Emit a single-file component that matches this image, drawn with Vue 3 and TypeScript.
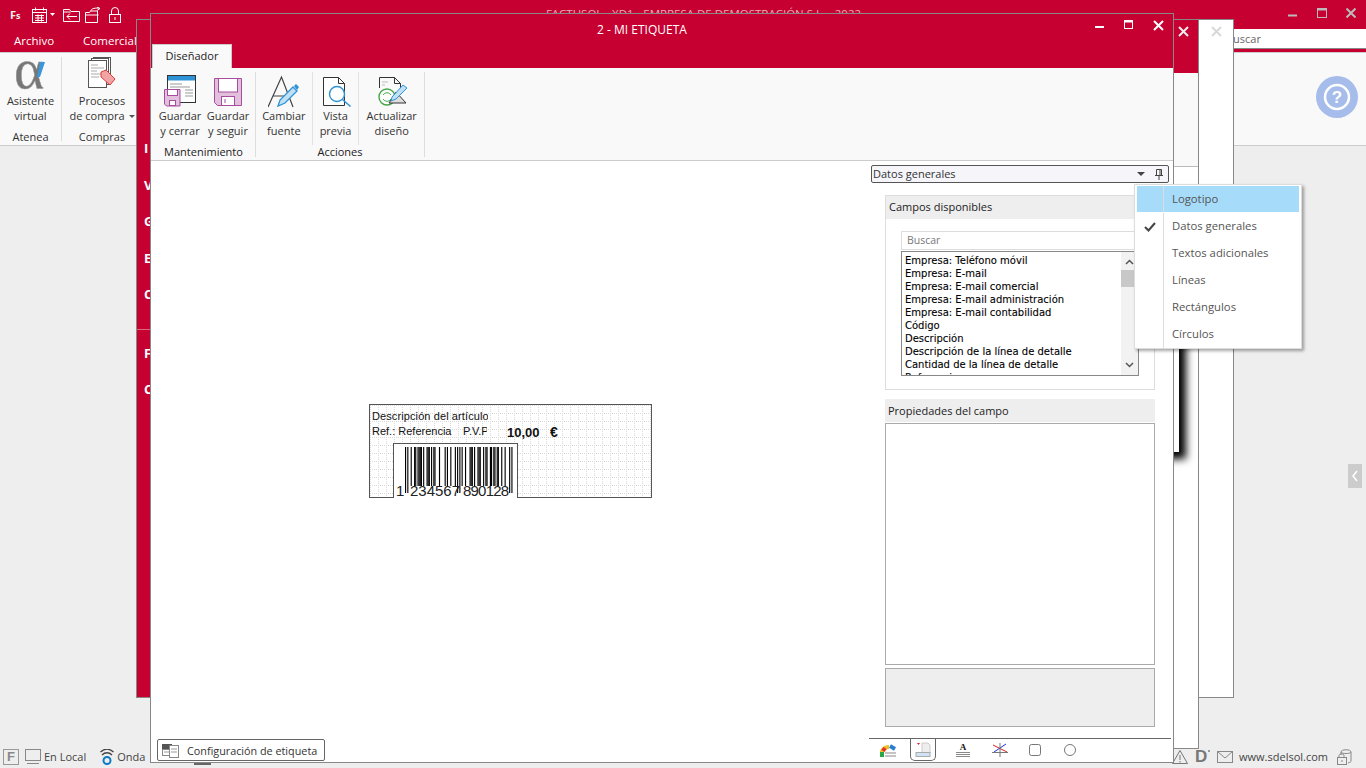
<template>
  <div class="desktop">
    <!-- main app behind everything -->
    <div class="app">
      <div class="app-title">
        <div class="qa">
          <span class="fs">F<small>s</small></span>
          <svg width="24" height="16" viewBox="0 0 24 16" fill="none" stroke="#fff"><rect x="1.500" y="2.500" width="14" height="13"/><path d="M1.500 5.500h14M4.500 .5v3M12.500 .5v3M4 8.500h9M4 11h9M4 13.500h9M7 7.500v7M10.500 7.500v7"/><path d="M19 6h5l-2.500 3z" fill="#fff" stroke="none"/></svg>
          <svg width="17" height="15" viewBox="0 0 17 15" fill="none" stroke="#fff"><path d="M.5 14.500v-12h6l1.500 2h8.500v10zM.5 5h7"/><path d="M14 9.500H4M7 6.500l-3 3 3 3"/></svg>
          <svg class="qa-open" width="16" height="16" viewBox="0 0 16 16" fill="none" stroke="#fff"><path d="M.5 15.500v-10h4l1-1.500h7v11.500zM.5 8h13"/><path d="M6 4c0-2 2-3 8-3M12 .0l3 1.500-3 2"/></svg>
          <svg width="12" height="16" viewBox="0 0 12 16" fill="none" stroke="#fff"><rect x=".5" y="7.500" width="11" height="8"/><path d="M2.500 7.500V4a3.500 3.500 0 0 1 7 0v3.500M6 10v3" /></svg>
        </div>
        <div class="app-name">FACTUSOL - XD1 - EMPRESA DE DEMOSTRACIÓN S.L. - 2022</div>
        <div class="win-btns gray">
          <svg width="10" height="10" viewBox="0 0 10 10"><path d="M0 7.500h9" stroke="#bbb" stroke-width="2"/></svg>
          <svg width="10" height="10" viewBox="0 0 10 10" fill="none" stroke="#bbb"><rect x=".5" y=".5" width="9" height="9"/><path d="M0 1.500h10" stroke-width="2"/></svg>
          <svg width="10" height="10" viewBox="0 0 10 10"><path d="M.5 .5l9 9M9.500 .5l-9 9" stroke="#bbb" stroke-width="2"/></svg>
        </div>
      </div>
      <div class="app-tabs">
        <span class="app-tab">Archivo</span>
        <span class="app-tab second">Comercial</span>
        <div class="app-search">Buscar</div>
      </div>
      <div class="app-ribbon">
        <div class="back-group first">
          <div class="back-btn">
            <svg width="32" height="34" viewBox="0 0 32 34"><text x="0" y="31" font-family="Liberation Serif, serif" font-size="58" fill="#777" stroke="#999" stroke-width=".5">α</text><path d="M23 20l3-15h5l-5 15z" fill="#3a97d9"/></svg>
            <span>Asistente<br />virtual</span>
          </div>
          <div class="back-label">Atenea</div>
        </div>
        <div class="back-group">
          <div class="back-btn">
            <svg width="30" height="34" viewBox="0 0 30 34" fill="#fff" stroke="#555"><rect x="6.500" y=".5" width="17" height="24"/><rect x="4.500" y="1.500" width="17" height="26"/><rect x="1.500" y="3.500" width="18" height="27"/><path d="M4 8h7M4 11h13M4 14h6M4 17h13M4 20h8" stroke="#aaa"/><path d="M14 15l5-2 9 9-5 6-9-8z" fill="#f2a3a3" stroke="#e03c3c"/></svg>
            <span>Procesos<br />de compra <i class="caret" /></span>
          </div>
          <div class="back-label">Compras</div>
        </div>
        <div class="help">
          <svg width="42" height="42" viewBox="0 0 42 42"><circle cx="21" cy="21" r="21" fill="#a6bcea"/><circle cx="21" cy="21" r="12" fill="none" stroke="#fff" stroke-width="2.500"/><text x="21" y="27" text-anchor="middle" font-family="Liberation Sans, sans-serif" font-weight="700" font-size="17" fill="#fff">?</text></svg>
        </div>
      </div>
      <div class="app-empty">
        <div class="side-tab"><svg width="14" height="24" viewBox="0 0 14 24"><path d="M9 7l-4 5 4 5" fill="none" stroke="#fff" stroke-width="1.500"/></svg></div>
      </div>
      <div class="status">
        <div class="status-left">
          <span class="f-box">F</span>
          <svg width="16" height="15" viewBox="0 0 16 15" fill="none" stroke="#888"><rect x=".5" y=".5" width="15" height="11"/><path d="M2 14.500h12"/></svg>
          <span class="st-text">En Local</span>
          <svg class="wave" width="14" height="16" viewBox="0 0 14 16" fill="none"><circle cx="7" cy="11.500" r="3.500" stroke="#0a7bc4" stroke-width="2"/><path d="M2 6c3-3 7-3 10 0M.5 3c4-3.500 9-3.500 13 0" stroke="#444" stroke-width="1.300"/></svg>
          <span class="st-text">Onda</span>
        </div>
        <div class="status-right">
          <svg width="16" height="14" viewBox="0 0 16 14" fill="none" stroke="#777"><path d="M8 .5l7.500 13H.5z"/><path d="M8 5v5M8 11v1.500"/></svg>
          <span class="d-mark">D</span>
          <svg class="mail" width="16" height="12" viewBox="0 0 16 12" fill="none" stroke="#888"><rect x=".5" y=".5" width="15" height="11"/><path d="M.5 .5L8 7l7.500-6.500"/></svg>
          <span class="st-text url">www.sdelsol.com</span>
          <svg width="16" height="16" viewBox="0 0 16 16" fill="none" stroke="#888"><path d="M5 3c0-3 10-3 10 0v9c0 1-1 1.500-3 2M5 3c0 2 10 2 10 0M5 3v3"/><rect x="1.500" y="8.500" width="9" height="7" fill="#eee"/><path d="M3 8.500V6.500c0-2 5-2 5 0v2M6 11v2"/></svg>
        </div>
      </div>
      <div class="sliver" />
    </div>

    <!-- window behind the designer -->
    <div class="win win-back">
      <div class="back-head"><svg width="11" height="11" viewBox="0 0 11 11"><path d="M1 1l9 9M10 1l-9 9" stroke="#eee" stroke-width="2"/></svg></div>
      <div class="back-body">
        <nav class="sidenav">
          <span>I</span><span>V</span><span>G</span><span>E</span><span>C</span>
          <hr />
          <span>F</span><span>C</span>
        </nav>
        <div class="back-main">
          <div class="back-strip" />
          <div class="shadow-bit" />
        </div>
      </div>
    </div>
    <!-- white window showing only below -->
    <div class="win win-under" />
    <div class="win win-thin">
      <svg width="11" height="11" viewBox="0 0 11 11"><path d="M1 1l9 9M10 1l-9 9" stroke="#d8d8d8" stroke-width="2"/></svg>
    </div>

    <!-- designer window -->
    <div class="win designer">
      <div class="des-head">
        <div class="des-title-row">
          <span class="des-title">2 - MI ETIQUETA</span>
          <div class="des-btns">
            <svg width="10" height="10" viewBox="0 0 10 10"><path d="M0 7h9" stroke="#fff" stroke-width="2"/></svg>
            <svg width="10" height="10" viewBox="0 0 10 10" fill="none" stroke="#fff"><rect x=".5" y=".5" width="8" height="8"/><path d="M0 1.500h9" stroke-width="2"/></svg>
            <svg width="11" height="11" viewBox="0 0 11 11"><path d="M1 1l9 9M10 1l-9 9" stroke="#fff" stroke-width="2"/></svg>
          </div>
        </div>
        <div class="des-tab">Diseñador</div>
      </div>

      <div class="ribbon">
        <div class="rgroup mant">
          <div class="rbtns">
            <div class="rbtn">
              <svg width="32" height="32" viewBox="0 0 32 32" fill="none">
                <rect x="3.500" y=".5" width="28" height="27" fill="#fff" stroke="#333"/>
                <rect x="4" y="1" width="27" height="4.500" fill="#2e93d6"/>
                <path d="M6 9h12M6 12h20M21 15h8M21 18h8M21 21h8" stroke="#999"/>
                <path d="M.5 14.500h15.500v16.500H2.500l-2-2z" fill="#e2bfdc" stroke="#a74da0"/>
                <rect x="3.500" y="14.500" width="10" height="6" fill="#fff" stroke="#a74da0"/>
                <rect x="5.500" y="25.500" width="6" height="5" fill="#fff" stroke="#a74da0"/>
              </svg>
              <span>Guardar<br />y cerrar</span>
            </div>
            <div class="rbtn">
              <svg width="32" height="32" viewBox="0 0 32 32" fill="none">
                <path d="M2.500 3.500h27v27h-24l-3-3z" fill="#e2bfdc" stroke="#a74da0"/>
                <rect x="6.500" y="3.500" width="19" height="13.500" fill="#fff" stroke="#a74da0"/>
                <rect x="9.500" y="21.500" width="13" height="9" fill="#fff" stroke="#a74da0"/>
                <path d="M13 24v4" stroke="#a74da0"/>
              </svg>
              <span>Guardar<br />y seguir</span>
            </div>
          </div>
          <div class="rlabel">Mantenimiento</div>
        </div>
        <div class="rgroup acc">
          <div class="rbtns">
            <div class="rbtn cambiar">
              <svg width="32" height="33" viewBox="0 0 32 33" fill="none">
                <path d="M0 32L13.500 2 25 32M5 21h15" stroke="#444" stroke-width="1.200"/>
                <path d="M10 31l2-6L25 12l4 4-12 12z" fill="#bfe0f5" stroke="#2e93d6" stroke-width="1.300"/>
                <path d="M26 11l2-2 3 3-2 3z" fill="#2e93d6"/>
              </svg>
              <span>Cambiar<br />fuente</span>
            </div>
            <div class="rbtn vista">
              <svg width="32" height="32" viewBox="0 0 32 32" fill="none">
                <path d="M3.500 2.500h15l6 6v22h-21z" fill="#fff" stroke="#333"/>
                <path d="M18.500 2.500v6h6" stroke="#333"/>
                <circle cx="17" cy="19" r="7.500" fill="#fff" stroke="#2e93d6" stroke-width="1.400"/>
                <path d="M22.500 24.500l8 7" stroke="#2e93d6" stroke-width="1.500"/>
              </svg>
              <span>Vista<br />previa</span>
            </div>
            <div class="rbtn actualizar">
              <svg width="32" height="32" viewBox="0 0 32 32" fill="none">
                <path d="M3.500 13V2.500h15l6 6v6M18.500 2.500v6h6" stroke="#333"/>
                <path d="M6 7h6M6 10h3" stroke="#bbb"/>
                <circle cx="11" cy="22" r="8" fill="#fff" stroke="#46a84a" stroke-width="1.400"/>
                <path d="M7 20c2-3 6-3 8 0M15 24c-2 3-6 3-8 0" stroke="#46a84a"/>
                <path d="M13 28l7-11 10 11z" fill="#ddd" stroke="#333"/>
                <path d="M16 22L27 10l4 3-11 11-5 2z" fill="#bfe0f5" stroke="#2e93d6"/>
              </svg>
              <span>Actualizar<br />diseño</span>
            </div>
          </div>
          <div class="rlabel">Acciones</div>
        </div>
      </div>

      <div class="work">
        <div class="canvas">
          <div class="label-card">
            <svg class="dots" width="281" height="92"><defs><pattern id="dotgrid" width="8" height="8" patternUnits="userSpaceOnUse"><path d="M0 0h1v1H0zM2 0h1v1H2zM4 0h1v1H4zM6 0h1v1H6zM0 2h1v1H0zM0 4h1v1H0zM0 6h1v1H0z" fill="#d9d9d9"/></pattern></defs><rect width="281" height="92" fill="url(#dotgrid)"/></svg>
            <span class="lb desc">Descripción del artículo</span>
            <span class="lb ref">Ref.: Referencia</span>
            <span class="lb pvp">P.V.P.</span>
            <span class="lb price">10,00</span>
            <span class="lb euro">€</span>
            <div class="barcode">
              <svg width="122" height="54" viewBox="0 0 122 54">
                <rect v-for="b in bars" :key="b.x" :x="b.x" y="3" :width="b.w" :height="b.guard ? 46 : 39" fill="#000"/>
              </svg>
              <span class="code first-digit">1</span>
              <span class="code left-digits">234567</span>
              <span class="code right-digits">890128</span>
            </div>
          </div>
          <div class="cfg-tab">
            <svg width="18" height="16" viewBox="0 0 18 16" fill="none"><rect x="0" y="2" width="10" height="5" fill="#555"/><rect x=".5" y="7.500" width="8" height="6" fill="#fff" stroke="#888"/><rect x="7.500" y="3.500" width="9" height="12" fill="#fff" stroke="#888"/><path d="M9 7h6M9 10h6M2 10h5" stroke="#999"/></svg>
            <span>Configuración de etiqueta</span>
          </div>
        </div>

        <aside class="side">
          <div class="combo">
            <span class="combo-text">Datos generales</span>
            <svg width="10" height="6" viewBox="0 0 10 6"><path d="M1 1h8L5 5z" fill="#444"/></svg>
            <svg width="8" height="11" viewBox="0 0 8 11" fill="none" stroke="#444"><path d="M1.500 .5h5v6h-5zM0 6.500h8M4 7v4M5 1v5" /></svg>
          </div>
          <div class="panel fields">
            <div class="panel-head">Campos disponibles</div>
            <div class="panel-body">
              <div class="search-box">Buscar</div>
              <div class="list">
                <div class="list-items">
                  <div v-for="f in fields" :key="f" class="list-item">{{ f }}</div>
                </div>
                <div class="scroll">
                  <svg width="9" height="6" viewBox="0 0 9 6" fill="none" stroke="#555" stroke-width="1.500"><path d="M1 5l3.500-3.500L8 5"/></svg>
                  <div class="thumb" />
                  <svg width="9" height="6" viewBox="0 0 9 6" fill="none" stroke="#555" stroke-width="1.500"><path d="M1 1l3.500 3.500L8 1"/></svg>
                </div>
              </div>
            </div>
          </div>
          <div class="panel-head props-head">Propiedades del campo</div>
          <div class="props-box" />
          <div class="props-foot" />
          <div class="bottom-tabs">
            <div class="btab first-tab">
              <svg width="18" height="15" viewBox="0 0 18 15" fill="none"><path d="M1 13c0-5 3-9 8-9" stroke="#f0c020" stroke-width="4"/><path d="M2 14v-5" stroke="#27a844" stroke-width="4"/><path d="M3 8l2-3" stroke="#e53030" stroke-width="4"/><path d="M10 3l5 3" stroke="#2a7fd0" stroke-width="4"/><path d="M5 10h11M5 13h11" stroke="#888"/></svg>
            </div>
            <div class="btab active">
              <svg width="16" height="16" viewBox="0 0 16 16" fill="none"><path d="M2 1h3l-1.500 2z" fill="#e02020"/><path d="M7 1h6l2 2v8H7z" fill="#eee" stroke="#ccc"/><rect x="1" y="10.500" width="14" height="4" fill="#cfe3f5" stroke="#aaa"/></svg>
            </div>
            <div class="btab text-tab">
              <svg width="14" height="14" viewBox="0 0 14 14" fill="none"><text x="7" y="7" text-anchor="middle" font-family="Liberation Serif, serif" font-weight="700" font-size="9" fill="#111">A</text><path d="M0 9.500h14M0 11.500h14M0 13.500h14" stroke="#888"/></svg>
            </div>
            <div class="btab">
              <svg width="16" height="14" viewBox="0 0 16 14" fill="none"><path d="M1 2l14 7" stroke="#e02020"/><path d="M14 1L2 9" stroke="#1a2fe0"/><path d="M0 9.500h16M8 0v14" stroke="#777"/></svg>
            </div>
            <div class="btab">
              <svg width="12" height="12" viewBox="0 0 12 12" fill="none" stroke="#777"><rect x=".5" y=".5" width="11" height="11" rx="2"/></svg>
            </div>
            <div class="btab">
              <svg width="12" height="12" viewBox="0 0 12 12" fill="none" stroke="#777"><circle cx="6" cy="6" r="5.500"/></svg>
            </div>
          </div>
        </aside>
      </div>
    </div>

    <!-- dropdown menu -->
    <div class="menu">
      <div v-for="(m, i) in menuItems" :key="m" class="menu-item" :class="{ hot: i === 0 }">
        <span class="menu-check">
          <svg v-if="m === 'Datos generales'" width="12" height="10" viewBox="0 0 12 10" fill="none"><path d="M1 5l3.500 3.500L11 1" stroke="#444" stroke-width="2"/></svg>
        </span>
        <span class="menu-text">{{ m }}</span>
      </div>
    </div>
  </div>
</template>

<script setup lang="ts">
const fields = [
  'Empresa: Teléfono móvil',
  'Empresa: E-mail',
  'Empresa: E-mail comercial',
  'Empresa: E-mail administración',
  'Empresa: E-mail contabilidad',
  'Código',
  'Descripción',
  'Descripción de la línea de detalle',
  'Cantidad de la línea de detalle',
  'Referencia',
]

const menuItems = ['Logotipo', 'Datos generales', 'Textos adicionales', 'Líneas', 'Rectángulos', 'Círculos']

// EAN-13 for 1234567890128
const L = ['0001101', '0011001', '0010011', '0111101', '0100011', '0110001', '0101111', '0111011', '0110111', '0001011']
const R = L.map((c) => c.split('').map((b) => (b === '1' ? '0' : '1')).join(''))
const G = R.map((c) => c.split('').reverse().join(''))
const digits = '234567890128'.split('').map(Number)
const leftParity = 'LLGLGG'.split('')

let pattern = '101'
digits.slice(0, 6).forEach((d, i) => {
  pattern += leftParity[i] === 'L' ? L[d] : G[d]
})
pattern += '01010'
digits.slice(6).forEach((d) => {
  pattern += R[d]
})
pattern += '101'

const moduleW = 107.5 / 95
const bars: { x: number; w: number; guard: boolean }[] = []
for (let i = 0; i < pattern.length; i++) {
  if (pattern[i] === '1') {
    bars.push({
      x: 11 + i * moduleW,
      w: moduleW,
      guard: i < 3 || i > 91 || (i >= 45 && i < 50),
    })
  }
}
</script>

<style>
html, body { margin: 0; background: #eee; }
</style>

<style scoped>
.desktop {
  position: relative; width: 1366px; height: 768px; overflow: hidden;
  background: #eee; font-family: "Open Sans", "Noto Sans", sans-serif; font-size: 11px; color: #333;
}

/* app behind */
.app { display: flex; flex-direction: column; height: 768px; }
.app-title { height: 29px; background: #c60030; display: flex; align-items: center; padding: 0 10px 0 8px; flex-shrink: 0; position: relative; }
.qa { display: flex; align-items: center; gap: 8px; height: 29px; width: 117px; }
.qa-open { margin-left: -3px; }
.fs { color: #eee; font-weight: 700; font-size: 11px; width: 13px; margin-left: 2px; }
.fs small { font-size: 9px; }
.app-name { flex: 1; text-align: center; color: #e9a7b8; font-size: 11.500px; padding-right: 6px; line-height: 29px; margin-top: -2px; }
.win-btns { display: flex; gap: 19px; margin-top: -3px; }
.app-tabs { height: 23px; background: #c60030; display: flex; align-items: flex-start; flex-shrink: 0; position: relative; }
.app-tab { color: #fff; font-size: 11.500px; padding: 4px 0 0 14px; }
.app-tab.second { padding-left: 29px; }
.app-search { margin-left: auto; width: 140px; height: 20px; background: #fff; border-bottom: 1px solid #888; box-sizing: border-box; color: #666; font-size: 11px; padding: 2px 0 0 0; }
.app-ribbon { height: 94px; background: #f9f9f9; border-top: 1px solid #ccc; border-bottom: 1px solid #ccc; box-sizing: border-box; display: flex; flex-shrink: 0; padding-top: 4px; }
.back-group { display: flex; flex-direction: column; align-items: center; width: 80px; height: 84px; border-right: 1px solid #ddd; }
.back-group.first { width: 61px; }
.back-btn { display: flex; flex-direction: column; align-items: center; text-align: center; line-height: 15px; flex: 1; }
.back-btn svg { margin-bottom: 2px; }
.back-label { line-height: 16px; margin-bottom: -4px; }
.caret { display: inline-block; width: 0; height: 0; border: 3px solid transparent; border-top-color: #555; border-bottom: 0; vertical-align: 2px; margin-left: 1px; }
.help { margin-left: auto; margin-right: 8px; padding-top: 19px; }
.app-empty { flex: 1; display: flex; justify-content: flex-end; align-items: flex-start; padding-top: 318px; padding-right: 4px; }
.side-tab { width: 14px; height: 24px; background: #ccc; }
.status { height: 23px; display: flex; justify-content: space-between; align-items: center; flex-shrink: 0; }
.status-left { display: flex; align-items: center; gap: 3px; padding-left: 3px; }
.status-right { display: flex; align-items: center; gap: 8px; padding-right: 14px; }
.f-box { width: 14px; height: 14px; border: 1px solid #999; color: #888; font-weight: 700; font-family: "Liberation Sans", sans-serif; font-size: 13px; line-height: 14px; text-align: center; margin-right: 3px; }
.st-text { font-size: 11px; color: #444; }
.wave { margin-left: 11px; }
.d-mark { position: relative; font-family: "Liberation Sans", sans-serif; font-weight: 700; font-size: 17px; line-height: 17px; color: #777; width: 12px; margin: 0 2px 0 -1px; }
.d-mark::after { content: ""; position: absolute; right: -3px; top: 2px; width: 2px; height: 2px; background: #999; }
.mail { margin-right: -2px; }
.sliver { position: absolute; left: 194px; top: 762px; width: 17px; height: 3px; background: #666; }

/* windows */
.win { position: absolute; box-sizing: border-box; border: 1px solid #888; background: #fff; }
.win-under { left: 1120px; top: 690px; width: 79px; height: 59px; border-top: 0; }
.win-back { left: 136px; top: 19px; width: 1063px; height: 679px; display: flex; flex-direction: column; }
.back-head { height: 53px; background: #c60030; display: flex; justify-content: flex-end; padding: 6px 9px 0 0; box-sizing: border-box; flex-shrink: 0; }
.back-body { flex: 1; display: flex; min-height: 0; }
.sidenav { width: 14px; background: #c60030; display: flex; flex-direction: column; padding-top: 66px; box-sizing: border-box; overflow: hidden; flex-shrink: 0; }
.sidenav span { height: 36.500px; line-height: 18px; padding-left: 7px; color: #fff; font-size: 13px; font-weight: 700; flex-shrink: 0; }
.sidenav hr { border: 0; height: 1px; background: #dd6680; margin: 7px 0 14px; flex-shrink: 0; }
.back-main { flex: 1; position: relative; background: #fff; }
.back-strip { height: 93px; background: #f9f9f9; border-bottom: 1px solid #bbb; }
.shadow-bit {
  position: absolute; left: 948px; top: 127px; width: 80px; height: 252px;
  background: #fff; box-shadow: 7px 7px 8px #000;
}
.win-thin { left: 1198px; top: 19px; width: 36px; height: 679px; display: flex; justify-content: center; padding-top: 6px; }

.designer { left: 150px; top: 13px; width: 1024px; height: 750px; display: flex; flex-direction: column; }
.des-head { height: 54px; background: #c60030; position: relative; flex-shrink: 0; display: flex; flex-direction: column; }
.des-title-row { height: 29px; display: flex; align-items: center; justify-content: center; color: #fff; font-size: 12px; }
.des-title { padding-right: 40px; margin-top: 2px; }
.des-btns { position: absolute; right: 9px; top: 6px; display: flex; gap: 19px; align-items: flex-start; }
.des-tab { width: 80px; height: 24px; margin: auto 0 0 1px; background: #f9f9f9; color: #222; box-sizing: border-box; text-align: center; line-height: 21px; font-size: 11px; border: 1px solid #ccc; border-bottom: 0; }
.ribbon { height: 93px; background: #f9f9f9; border-bottom: 1px solid #ccc; box-sizing: border-box; display: flex; padding-top: 4px; flex-shrink: 0; }
.rgroup { display: flex; flex-direction: column; border-right: 1px solid #ddd; height: 85px; box-sizing: border-box; }
.mant { width: 105px; padding-left: 5px; }
.mant .rlabel { padding-right: 4px; }
.acc { width: 169px; }
.rbtns { display: flex; flex: 1; }
.rbtn { display: flex; flex-direction: column; align-items: center; text-align: center; line-height: 15px; height: 73px; white-space: nowrap; }
.rbtn svg { margin: 3px 0 .5px; flex-shrink: 0; }
.rbtn.cambiar svg { margin-bottom: -.5px; }
.mant .rbtn { width: 48px; }
.cambiar { width: 56px; border-right: 1px solid #e2e2e2; }
.vista { width: 46px; border-right: 1px solid #e2e2e2; }
.actualizar { width: 65px; }
.rlabel { text-align: center; line-height: 14px; color: #222; }

.work { flex: 1; display: flex; min-height: 0; }
.canvas { flex: 1; position: relative; }
.label-card { position: absolute; left: 218px; top: 243px; width: 283px; height: 94px; box-sizing: border-box; border: 1px solid #555; font-family: "Liberation Sans", Arial, sans-serif; color: #111; }
.dots { position: absolute; inset: 0; }
.lb { position: absolute; font-size: 11px; line-height: 13px; white-space: nowrap; }
.desc { left: 2px; top: 5px; width: 116px; overflow: hidden; letter-spacing: .1px; }
.ref { left: 2px; top: 20px; }
.pvp { left: 93px; top: 20px; width: 24px; overflow: hidden; }
.price { left: 137px; top: 20px; font-size: 13px; font-weight: 700; line-height: 15px; }
.euro { left: 180px; top: 20px; font-size: 14px; font-weight: 700; line-height: 15px; }
.barcode { position: absolute; left: 23px; top: 38px; width: 125px; height: 55px; box-sizing: border-box; border: 1px solid #555; border-bottom: 0; background: #fff; overflow: hidden; }
.barcode svg { display: block; }
.code { position: absolute; top: 39px; font-size: 15px; line-height: 15px; white-space: nowrap; color: #222; }
.first-digit { left: 2px; }
.left-digits { left: 16px; }
.right-digits { left: 69px; letter-spacing: -.8px; }
.cfg-tab { position: absolute; left: 6px; bottom: 1px; width: 168px; height: 22px; box-sizing: border-box; border: 1px solid #666; border-radius: 2px; background: #fff; display: flex; align-items: center; gap: 7px; padding-left: 4px; color: #333; font-size: 10.800px; }

.side { width: 303px; padding: 4px 3px 0 1px; box-sizing: border-box; display: flex; flex-direction: column; flex-shrink: 0; }
.combo { height: 18px; margin-right: 1px; border: 1px solid #555; border-radius: 2px; background: #f5f5fa; box-sizing: border-box; display: flex; align-items: center; padding: 0 5px 0 1px; gap: 9px; flex-shrink: 0; }
.combo-text { flex: 1; font-size: 11px; margin-top: -2px; }
.panel { margin: 12px 15px 0 14px; }
.fields { border: 1px solid #ddd; height: 195px; box-sizing: border-box; flex-shrink: 0; }
.panel-head { background: #eee; height: 23px; line-height: 22px; padding-left: 3px; color: #222; font-size: 11px; }
.panel-body { padding: 12px 15px 0; }
.search-box { height: 19px; border: 1px solid #ddd; margin-right: -20px; box-sizing: border-box; line-height: 17px; padding-left: 5px; color: #777; font-size: 10.500px; }
.list { margin-top: 1px; height: 125px; border: 1px solid #888; box-sizing: border-box; display: flex; overflow: hidden; }
.list-items { flex: 1; padding: 2px 0 0 3px; overflow: hidden; }
.list-item { height: 13px; line-height: 13px; font-family: "DejaVu Sans", Verdana, sans-serif; font-size: 10px; color: #000; white-space: nowrap; -webkit-text-stroke: .1px #000; }
.scroll { width: 17px; background: #f2f2f2; display: flex; flex-direction: column; align-items: center; padding-top: 7px; box-sizing: border-box; }
.thumb { width: 100%; height: 17px; background: #c8c8c8; margin-top: 5px; margin-bottom: auto; }
.scroll svg:last-child { margin-bottom: 7px; }
.props-head { margin: 9px 15px 0 14px; flex-shrink: 0; line-height: 24px; }
.props-box { height: 242px; margin: 1px 15px 0 14px; border: 1px solid #aaa; box-sizing: border-box; flex-shrink: 0; }
.props-foot { height: 59px; margin: 3px 15px 0 14px; border: 1px solid #aaa; background: #eee; box-sizing: border-box; flex-shrink: 0; }
.bottom-tabs { margin: 11px -1px 0 -2px; height: 24px; border-top: 1px solid #666; display: flex; padding-left: 7px; flex-shrink: 0; box-sizing: border-box; }
.btab { width: 35px; height: 22px; display: flex; align-items: center; justify-content: center; box-sizing: border-box; }
.btab.first-tab { width: 34px; padding-right: 8px; }
.btab.text-tab { width: 39px; }
.btab.active { width: 26px; border: 1px solid #666; border-top: 0; border-radius: 0 0 5px 5px; background: #fff; margin-right: 7px; }

.menu { position: absolute; left: 1134px; top: 184px; width: 168px; height: 165px; box-sizing: border-box; padding: 1px 2px; background: #fff; border: 1px solid #ddd; box-shadow: 2px 2px 3px rgba(0,0,0,0.35); font-size: 11.300px; color: #555; }
.menu-item { height: 27px; display: flex; align-items: center; }
.menu-item.hot { background: #a6dbfa; height: 26px; margin-bottom: 1px; }
.menu-check { width: 27px; align-self: stretch; border-right: 1px solid #ddd; display: flex; align-items: center; justify-content: center; box-sizing: border-box; flex-shrink: 0; }
.menu-text { padding-left: 8px; margin-top: -2px; }
</style>
